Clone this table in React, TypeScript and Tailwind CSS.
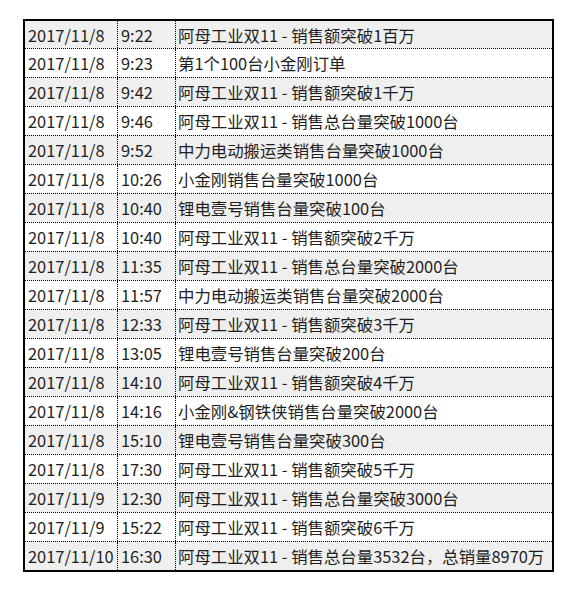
const rows: [string, string, string][] = [
  ['2017/11/8', '9:22', '阿母工业双11 - 销售额突破1百万'],
  ['2017/11/8', '9:23', '第1个100台小金刚订单'],
  ['2017/11/8', '9:42', '阿母工业双11 - 销售额突破1千万'],
  ['2017/11/8', '9:46', '阿母工业双11 - 销售总台量突破1000台'],
  ['2017/11/8', '9:52', '中力电动搬运类销售台量突破1000台'],
  ['2017/11/8', '10:26', '小金刚销售台量突破1000台'],
  ['2017/11/8', '10:40', '锂电壹号销售台量突破100台'],
  ['2017/11/8', '10:40', '阿母工业双11 - 销售额突破2千万'],
  ['2017/11/8', '11:35', '阿母工业双11 - 销售总台量突破2000台'],
  ['2017/11/8', '11:57', '中力电动搬运类销售台量突破2000台'],
  ['2017/11/8', '12:33', '阿母工业双11 - 销售额突破3千万'],
  ['2017/11/8', '13:05', '锂电壹号销售台量突破200台'],
  ['2017/11/8', '14:10', '阿母工业双11 - 销售额突破4千万'],
  ['2017/11/8', '14:16', '小金刚&钢铁侠销售台量突破2000台'],
  ['2017/11/8', '15:10', '锂电壹号销售台量突破300台'],
  ['2017/11/8', '17:30', '阿母工业双11 - 销售额突破5千万'],
  ['2017/11/9', '12:30', '阿母工业双11 - 销售总台量突破3000台'],
  ['2017/11/9', '15:22', '阿母工业双11 - 销售额突破6千万'],
  ['2017/11/10', '16:30', '阿母工业双11 - 销售总台量3532台，总销量8970万'],
]

export default function App() {
  return (
    <div className="w-[580px] h-[597px] bg-white pt-[19px] pl-[23px]">
      <div
        className="w-[531px] border-2 border-black text-[16.4px] text-[#1e1e1e]"
        style={{ fontFamily: '"Noto Sans CJK SC", "Noto Sans", sans-serif' }}
      >
        {rows.map(([date, time, event], i) => (
          <div
            key={i}
            className={`flex items-center leading-none ${i % 2 === 0 ? 'bg-[#efefef]' : 'bg-white'} ${i > 0 ? 'h-[29px] border-t border-dotted border-black' : 'h-[27px]'}`}
          >
            <div className="w-[93px] h-full flex items-center pl-[3px] pt-[1px] border-r border-dotted border-black">{date}</div>
            <div className="w-[58px] h-full flex items-center pl-[3px] pt-[1px] border-r border-dotted border-black">{time}</div>
            <div className="flex-1 h-full flex items-center pl-[2px] pt-[1px] whitespace-nowrap">{event}</div>
          </div>
        ))}
      </div>
    </div>
  )
}
